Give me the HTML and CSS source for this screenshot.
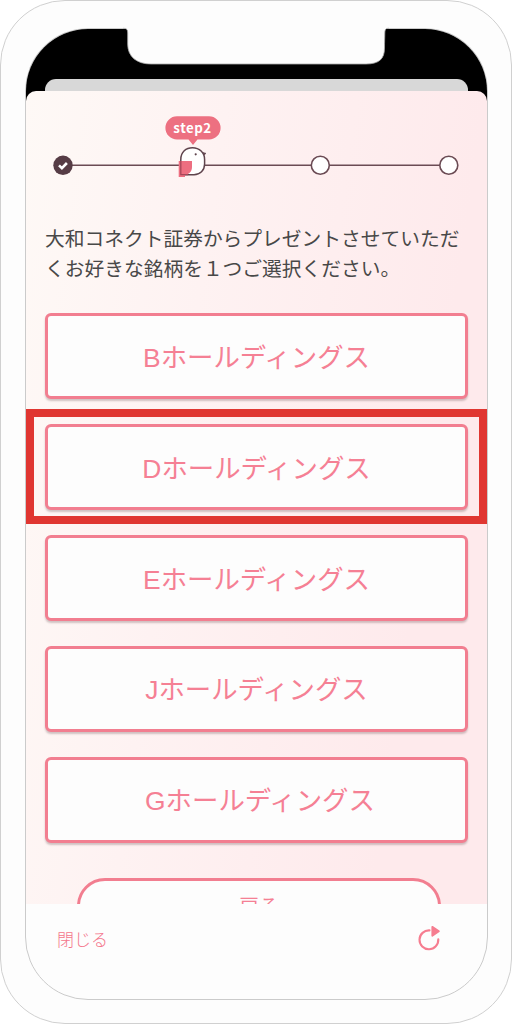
FILE: index.html
```html
<!DOCTYPE html>
<html lang="ja">
<head>
<meta charset="utf-8">
<title>銘柄選択</title>
<link rel="stylesheet" href="styles.css">
</head>
<body>
<div class="phone">
  <div class="screen">
    <div class="status"><div class="sheet-behind"></div></div>
    <main class="sheet">
      <svg class="steps" width="461" height="90" viewBox="26 105 461 90" aria-label="step2">
        <path d="M62 165.3H449" stroke="#6b4b54" stroke-width="1.6"/>
        <circle cx="63" cy="165.3" r="9.7" fill="#563c45"/>
        <path d="M59 165.4l2.9 2.8 5-5.2" fill="none" stroke="#fff" stroke-width="2.6"/>
        <circle cx="320.3" cy="165.3" r="9" fill="#fff" stroke="#6b4b54" stroke-width="1.6"/>
        <circle cx="448.8" cy="165.3" r="9" fill="#fff" stroke="#6b4b54" stroke-width="1.6"/>
        <path d="M180.8 174.7V159.5C180.8 152 186 147.7 192.5 147.7C199.4 147.7 204.6 152.6 204.6 159.5V164C204.6 170.5 200 174.7 194 174.7Z" fill="#fff" stroke="#5f444d" stroke-width="1.5"/>
        <path d="M202.7 152.4L206 153.4L203.9 155" fill="#5f444d" stroke="#5f444d" stroke-width=".7"/>
        <circle cx="195.7" cy="154.3" r="1.1" fill="#5f444d"/>
        <path d="M178.7 161H192V167C192 171.5 189.5 174.2 185 174.7V177H178.7Z" fill="#ed6e80"/>
        <path d="M180.8 161V174.7H188" fill="none" stroke="#a64759" stroke-width="1.3"/>
        <path d="M177 116.3H209A11.5 11.5 0 0 1 209 139.5H197.5L193 145L188.5 139.5H177A11.5 11.5 0 0 1 177 116.3Z" fill="#ed7081"/>
        <text class="step-label" x="192.5" y="132.6" text-anchor="middle">step2</text>
      </svg>
      <p class="lead">大和コネクト証券からプレゼントさせていただ<br>くお好きな銘柄を１つご選択ください。</p>
      <div class="choices">
        <button class="choice">Bホールディングス</button>
        <button class="choice selected">Dホールディングス</button>
        <button class="choice">Eホールディングス</button>
        <button class="choice raised">Jホールディングス</button>
        <button class="choice raised shifted">Gホールディングス</button>
      </div>
      <button class="back">戻る</button>
    </main>
    <footer class="toolbar">
      <span class="close">閉じる</span>
      <svg class="reload" width="28" height="30" viewBox="415 924 28 30">
        <path d="M429.5 931.4A9.4 9.4 0 1 0 438.3 940.3" fill="none" stroke="#f67d90" stroke-width="2.1" stroke-linecap="round"/>
        <path d="M432.3 927.8L438.9 932.2L432.3 936.8Z" fill="#f67d90" stroke="#f67d90" stroke-width="1.8" stroke-linejoin="round"/>
      </svg>
    </footer>
  </div>
  <svg class="notch" width="266" height="40" viewBox="123 26 266 40">
    <path d="M123 26V28.3H124C127 28.3 127.7 30 127.7 33V44C127.7 57 137 64 151 64H366C379 64 384.5 59 384.5 48C384.5 42 384.8 37 384.8 33C384.8 30 385.5 28.3 388 28.3H389V26Z" fill="#fdfdfd"/>
    <path d="M123 28.3H124C127 28.3 127.7 30 127.7 33V44C127.7 57 137 64 151 64H366C379 64 384.5 59 384.5 48C384.5 42 384.8 37 384.8 33C384.8 30 385.5 28.3 388 28.3H389" fill="none" stroke="#aaa" stroke-width=".8"/>
  </svg>
</div>
</body>
</html>
```
FILE: styles.css
```css
* { box-sizing: border-box; }
body {
  margin: 0;
  background: #fff;
  font-family: "Noto Sans CJK JP", "Noto Sans", sans-serif;
}
.phone {
  position: relative;
  width: 512px;
  height: 1024px;
  padding: 27px 23px 23px 24px;
  border: 1px solid #d0d0d0;
  border-radius: 65px;
  background: #fdfdfd;
}
.screen {
  display: flex;
  flex-direction: column;
  height: 972px;
  width: 463px;
  border: 1px solid #cbcbcb;
  border-radius: 63px;
  overflow: hidden;
  background: #fdfdfd;
}
.status {
  flex: none;
  height: 72px;
  margin-bottom: -10px;
  padding: 50px 19px 0;
  background: #000;
}
.sheet-behind {
  height: 12px;
  border-radius: 11px 11px 0 0;
  background: #d8d8d8;
}
.sheet {
  flex: none;
  height: 813px;
  padding-top: 14px;
  border-radius: 10px 10px 0 0;
  overflow: hidden;
  background: linear-gradient(98deg, #fef9f6 0%, #fef2f2 35%, #feeaec 80%, #feeaec 100%);
}
.steps { display: block; }
.step-label {
  font: 700 13.3px "Noto Sans CJK JP", sans-serif;
  letter-spacing: .5px;
  fill: #fff;
}
.lead {
  margin: 28px 0 0 19px;
  font-size: 19.74px;
  line-height: 30px;
  color: #484848;
  white-space: nowrap;
}
.choices {
  display: grid;
  gap: 25px;
  padding: 30px 19px 0;
}
.choice {
  position: relative;
  height: 86px;
  padding: 4px 0 0;
  border: 3px solid #f27e90;
  border-radius: 6px;
  background: #fdfdfd;
  box-shadow: 0 2px 2px rgba(90, 60, 65, .28);
  color: #f58094;
  font: 400 26.4px/1 "Liberation Sans", "Noto Sans CJK JP", sans-serif;
}
.raised { padding-top: 2px; }
.shifted { padding-left: 7px; }
.selected::after {
  content: "";
  position: absolute;
  inset: -18px -22px -17px;
  border: 8px solid #e03631;
}
.back {
  display: block;
  width: 364px;
  height: 56px;
  margin: 35px 0 0 51px;
  padding: 0;
  border: 3px solid #f27e90;
  border-radius: 28px 28px 0 0;
  background: #fdfdfd;
  color: #f58094;
  font: 400 20px/1 "Noto Sans CJK JP", sans-serif;
}
.toolbar {
  display: flex;
  justify-content: space-between;
  align-items: flex-start;
  padding: 19px 44px 0 31px;
}
.close {
  font-size: 17px;
  font-weight: 300;
  line-height: 32px;
  color: #f4758b;
}
.notch {
  position: absolute;
  left: 122px;
  top: 25px;
}
```
